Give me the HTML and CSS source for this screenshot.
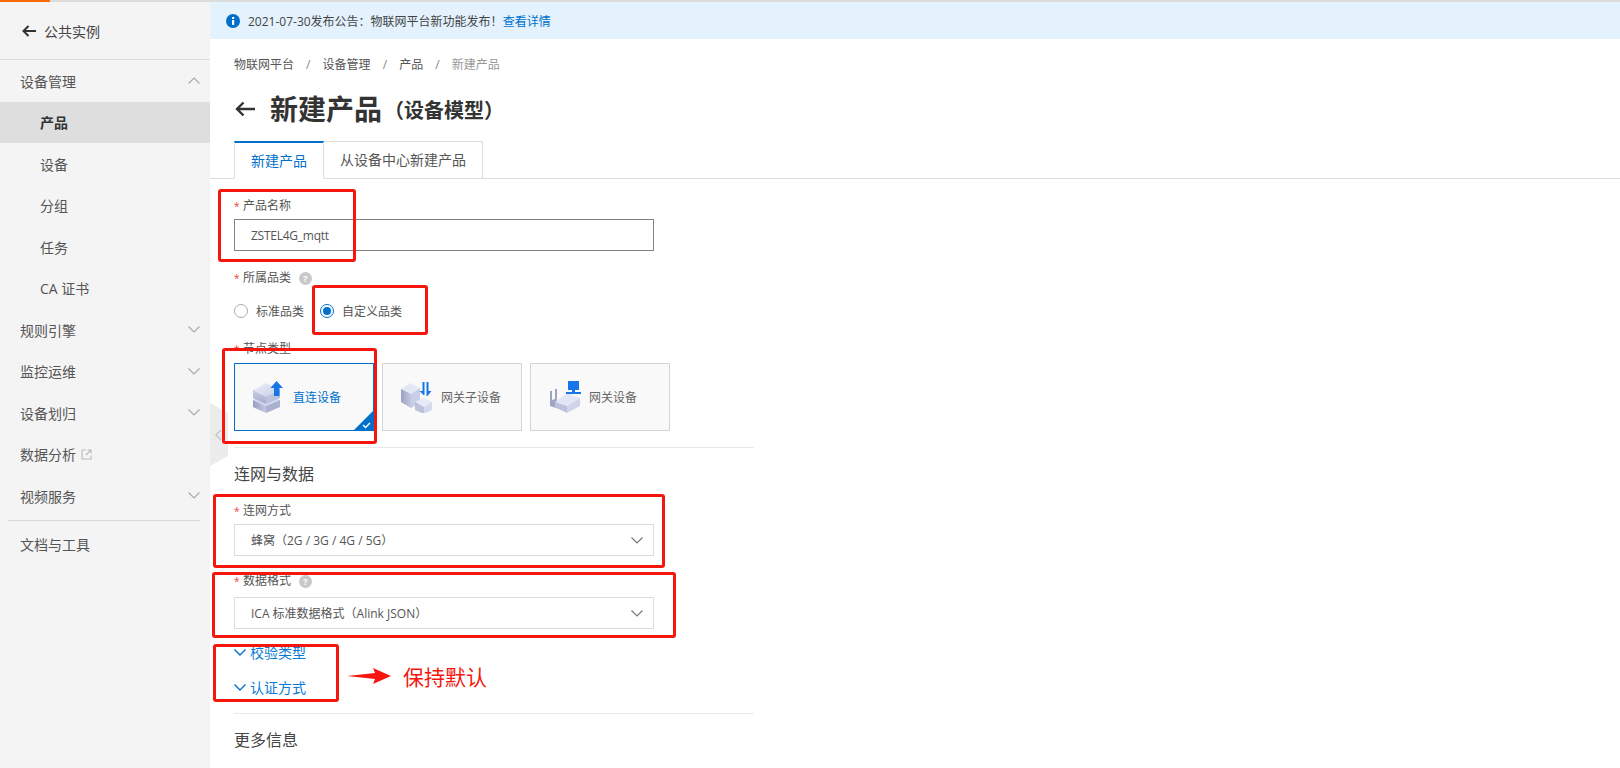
FILE: index.html
```html
<!DOCTYPE html>
<html lang="zh-CN">
<head>
<meta charset="utf-8">
<title>新建产品</title>
<link rel="stylesheet" href="styles.css">
</head>
<body>
<div class="top-strip"><div class="top-accent"></div></div>
<div class="page">
  <aside class="sidebar">
    <div class="back-row">
      <svg class="back-icon" viewBox="0 0 14 12"><path d="M14 6H2M6.500 1 1.500 6l5 5" fill="none" stroke="#333" stroke-width="2"/></svg>
      <span>公共实例</span>
    </div>
    <nav class="nav">
      <div class="nav-item"><span>设备管理</span><svg class="chev" viewBox="0 0 12 7"><path d="M.5 6.500 6 1l5.500 5.500" fill="none" stroke="#aaa" stroke-width="1.200"/></svg></div>
      <div class="nav-item sub active"><span>产品</span></div>
      <div class="nav-item sub"><span>设备</span></div>
      <div class="nav-item sub"><span>分组</span></div>
      <div class="nav-item sub"><span>任务</span></div>
      <div class="nav-item sub"><span>CA 证书</span></div>
      <div class="nav-item"><span>规则引擎</span><svg class="chev" viewBox="0 0 12 7"><path d="M.5.5 6 6l5.500-5.500" fill="none" stroke="#aaa" stroke-width="1.200"/></svg></div>
      <div class="nav-item"><span>监控运维</span><svg class="chev" viewBox="0 0 12 7"><path d="M.5.5 6 6l5.500-5.500" fill="none" stroke="#aaa" stroke-width="1.200"/></svg></div>
      <div class="nav-item"><span>设备划归</span><svg class="chev" viewBox="0 0 12 7"><path d="M.5.5 6 6l5.500-5.500" fill="none" stroke="#aaa" stroke-width="1.200"/></svg></div>
      <div class="nav-item start"><span>数据分析</span><svg class="ext" viewBox="0 0 11 11"><path d="M5 1H1v9h9V6.500M6.500 1H10v3.500M10 1 5 6" fill="none" stroke="#bbb" stroke-width="1.100"/></svg></div>
      <div class="nav-item"><span>视频服务</span><svg class="chev" viewBox="0 0 12 7"><path d="M.5.5 6 6l5.500-5.500" fill="none" stroke="#aaa" stroke-width="1.200"/></svg></div>
      <div class="nav-divider"></div>
      <div class="nav-item"><span>文档与工具</span></div>
    </nav>
  </aside>
  <main class="main">
    <div class="notice">
      <svg class="info" viewBox="0 0 14 14"><circle cx="7" cy="7" r="7" fill="#0070cc"/><rect x="6" y="6" width="2.200" height="5" fill="#fff"/><rect x="6" y="3" width="2.200" height="2" fill="#fff"/></svg>
      <span>2021-07-30发布公告：物联网平台新功能发布！</span><a class="link">查看详情</a>
    </div>
    <div class="content">
      <div class="crumbs"><span>物联网平台</span><i>/</i><span>设备管理</span><i>/</i><span>产品</span><i>/</i><span class="last">新建产品</span></div>
      <div class="title-row">
        <svg class="title-back" viewBox="0 0 20 16"><path d="M20 8H2M8.500 1.500 2 8l6.500 6.500" fill="none" stroke="#333" stroke-width="2.400"/></svg>
        <h1>新建产品</h1><span class="title-sub">（设备模型）</span>
      </div>
      <div class="tabs">
        <div class="tab on">新建产品</div>
        <div class="tab">从设备中心新建产品</div>
      </div>

      <div class="label first"><b>*</b>产品名称</div>
      <div class="field dark"><span class="tight">ZSTEL4G_mqtt</span></div>

      <div class="label gap19"><b>*</b>所属品类<span class="help">?</span></div>
      <div class="radios">
        <span class="radio"></span><span class="radio-text">标准品类</span>
        <span class="radio checked"></span><span class="radio-text">自定义品类</span>
      </div>

      <div class="label gap20"><b>*</b>节点类型</div>
      <div class="cards">
        <div class="card selected">
          <svg class="card-icon" viewBox="0 0 32 32">
            <defs>
              <linearGradient id="g1" x1="0" y1="0" x2="1" y2="1"><stop offset="0" stop-color="#eef0fb"/><stop offset="1" stop-color="#c6cbe4"/></linearGradient>
              <linearGradient id="g2" x1="0" y1="0" x2="1" y2="0"><stop offset="0" stop-color="#9aa0c2"/><stop offset="1" stop-color="#c3c8e0"/></linearGradient>
              <linearGradient id="g3" x1="0" y1="0" x2="0" y2="1"><stop offset="0" stop-color="#c9cee6"/><stop offset="1" stop-color="#a4aacb"/></linearGradient>
            </defs>
            <path d="M0 19 13 13l14 6-14 6z" fill="#d3d7ec"/><path d="M0 19v7l13 6v-7z" fill="url(#g2)"/><path d="M13 25v7l14-6v-7z" fill="#aab0cf"/>
            <path d="M0 9 13 2l14 7-14 7z" fill="url(#g1)"/><path d="M0 9v8l13 6v-7z" fill="url(#g3)"/><path d="M13 16v7l14-6V9z" fill="#bcc1dd"/>
            <path d="M21 15V7h-3.500L23.500 0l6.500 7h-3.500v8z" fill="#1677e8"/>
          </svg>
          <span>直连设备</span>
          <svg class="tick" viewBox="0 0 21 21"><path d="M21 0v21H0z" fill="#0070cc"/><path d="M10 15l2.500 2.500L17 13" fill="none" stroke="#fff" stroke-width="1.500"/></svg>
        </div>
        <div class="card">
          <svg class="card-icon" viewBox="0 0 32 32">
            <path d="M0 8 9 2l10 5-9 6z" fill="#e4e8f6"/><path d="M0 8v13l10 6V13z" fill="url(#g2)"/><path d="M10 13v14l9-5V7z" fill="#c9cee6"/>
            <path d="M14 21l8-4 9 4-8 5z" fill="#e6e9f7"/><path d="M14 21v8l9 4v-7z" fill="#bcc2dc"/><path d="M23 26v7l8-4v-8z" fill="#d6daee"/>
            <path d="M21.500 1h2v13h-1l-4-4h3zM25.500 1h2v9h3l-4 5h-1z" fill="#1677e8"/>
          </svg>
          <span>网关子设备</span>
        </div>
        <div class="card">
          <svg class="card-icon" viewBox="0 0 32 32">
            <path d="M1 10h2v9l3-1V8h2v15l12 8-19-6z" fill="#9ea4c6"/>
            <path d="M6 21l12-9 13 5-13 8z" fill="#e2e5f5"/><path d="M6 21v5l12 6v-7z" fill="#bcc2dc"/><path d="M18 25v7l13-7v-8z" fill="#cfd4ea"/>
            <rect x="19" y="0" width="11" height="9" fill="#1677e8"/><rect x="23" y="9" width="3" height="3" fill="#1677e8"/><rect x="17" y="11" width="15" height="2" fill="#1677e8"/>
          </svg>
          <span>网关设备</span>
        </div>
      </div>
      <div class="rule gap16"></div>

      <h2 class="section gap16">连网与数据</h2>

      <div class="label gap19"><b>*</b>连网方式</div>
      <div class="field select"><span>蜂窝（2G / 3G / 4G / 5G）</span><svg class="sel-chev" viewBox="0 0 12 7"><path d="M.5.5 6 6l5.500-5.500" fill="none" stroke="#777" stroke-width="1.200"/></svg></div>

      <div class="label gap17"><b>*</b>数据格式<span class="help">?</span></div>
      <div class="field select low"><span>ICA 标准数据格式（Alink JSON）</span><svg class="sel-chev" viewBox="0 0 12 7"><path d="M.5.5 6 6l5.500-5.500" fill="none" stroke="#777" stroke-width="1.200"/></svg></div>

      <div class="more gap13"><svg viewBox="0 0 12 7"><path d="M.5.5 6 6l5.500-5.500" fill="none" stroke="#0070cc" stroke-width="1.400"/></svg><span>校验类型</span></div>
      <div class="more gap15"><svg viewBox="0 0 12 7"><path d="M.5.5 6 6l5.500-5.500" fill="none" stroke="#0070cc" stroke-width="1.400"/></svg><span>认证方式</span></div>
      <div class="rule gap16"></div>
      <h2 class="section gap16">更多信息</h2>
    </div>
  </main>

  <svg class="collapse" viewBox="0 0 18 63"><path d="M0 0 18 10v43L0 63z" fill="#ececec"/><path d="M11 27l-5 5 5 5" fill="none" stroke="#c8c8c8" stroke-width="1.500"/></svg>

  <div class="mark m1"></div>
  <div class="mark m2"></div>
  <div class="mark m3"></div>
  <div class="mark m4"></div>
  <div class="mark m5"></div>
  <div class="mark m6"></div>
  <svg class="red-arrow" viewBox="0 0 44 16"><path d="M0 8 28 5 26 0l18 8-18 8 2-5z" fill="#f5160e"/></svg>
  <div class="keep">保持默认</div>
</div>
</body>
</html>
```

FILE: styles.css
```css
* { box-sizing: border-box; }
html, body { margin: 0; height: 768px; overflow: hidden; background: #fff; }
body { font-family: "Open Sans", "Noto Sans CJK SC", sans-serif; font-size: 12px; color: #555; }

.top-strip { height: 2px; background: #dcdcdc; }
.top-accent { width: 50px; height: 2px; background: #ff6a00; }

.page { position: relative; display: flex; height: 766px; }

.sidebar { width: 210px; flex: none; background: #f4f4f4; font-size: 14px; color: #555; }
.back-row { height: 58px; display: flex; align-items: center; gap: 8px; padding-left: 22px; border-bottom: 1px solid #dcdcdc; color: #444; }
.back-icon { width: 14px; height: 12px; }
.nav-item { height: 41.500px; display: flex; align-items: center; justify-content: space-between; padding: 0 10px 0 20px; }
.nav-item.sub { padding-left: 40px; }
.nav-item.start { justify-content: flex-start; gap: 5px; }
.nav-item.active { background: #dedede; color: #333; font-weight: 700; }
.chev { width: 12px; height: 7px; }
.ext { width: 11px; height: 11px; }
.nav-divider { height: 1px; margin: 3px 10px 3px 8px; background: #d8d8d8; }

.main { flex: 1; min-width: 0; }
.notice { height: 37px; display: flex; align-items: center; background: #e3f2fd; padding-left: 16px; color: #444; }
.info { width: 14px; height: 14px; margin-right: 8px; }
.link { color: #0070cc; }
.content { padding-left: 24px; }

.crumbs { display: flex; align-items: center; gap: 12px; height: 20px; margin-top: 15px; color: #555; }
.crumbs i { font-style: normal; color: #888; width: 4.600px; }
.crumbs .last { color: #999; }

.title-row { display: flex; align-items: center; height: 40px; margin-top: 15px; color: #333; }
.title-back { width: 20px; height: 16px; margin: 0 15px 0 1px; }
h1 { margin: 0; font-size: 28px; font-weight: 700; line-height: 40px; }
.title-sub { font-size: 20px; font-weight: 700; margin-left: 2px; }

.tabs { display: flex; height: 38px; margin: 12px 0 0 -24px; padding-left: 24px; border-bottom: 1px solid #dcdcdc; }
.tab { height: 38px; padding: 0 16px; border: 1px solid #dcdcdc; border-left: 0; font-size: 14px; line-height: 36px; color: #555; }
.tab.on { border-left: 1px solid #dcdcdc; border-top: 2px solid #0070cc; border-bottom: 1px solid #fff; color: #0070cc; }

.label { height: 16px; line-height: 16px; color: #555; display: flex; align-items: center; }
.label b { width: 9px; color: #e8463a; font-weight: 400; font-size: 10px; }
.first { margin-top: 19px; }
.gap19 { margin-top: 19px; }
.gap20 { margin-top: 20px; }
.gap17 { margin-top: 17px; }
.gap16 { margin-top: 16px; }
.gap15 { margin-top: 15px; }
.gap13 { margin-top: 13px; }

.help { width: 13px; height: 13px; margin-left: 8px; border-radius: 50%; background: #c8c8c8; color: #fff; font-size: 9px; font-weight: 700; line-height: 13px; text-align: center; }

.field { width: 420px; height: 32px; margin-top: 5px; padding: 0 16px; display: flex; align-items: center; border: 1px solid #dcdcdc; color: #555; }
.field.dark { border-color: #808080; }
.field.low { margin-top: 8px; }
.tight { letter-spacing: -0.25px; }
.select { justify-content: space-between; padding-right: 10px; }
.sel-chev { width: 12px; height: 7px; }

.radios { display: flex; align-items: center; height: 20px; margin-top: 15px; }
.radio { width: 14px; height: 14px; border-radius: 50%; border: 1px solid #aaa; background: #fff; margin-right: 8px; }
.radio.checked { border-color: #0070cc; position: relative; }
.radio.checked::after { content: ""; position: absolute; inset: 2px; border-radius: 50%; background: #0070cc; }
.radio-text { margin-right: 16px; }

.cards { display: flex; gap: 8px; margin-top: 6px; }
.card { position: relative; width: 140px; height: 68px; display: flex; align-items: center; gap: 8px; padding-left: 18px; background: #f9f9f9; border: 1px solid #d4d4d4; color: #666; }
.card.selected { border-color: #0070cc; color: #0070cc; }
.card-icon { width: 32px; height: 32px; flex: none; }
.tick { position: absolute; right: -1px; bottom: -1px; width: 21px; height: 21px; }

.rule { width: 520px; height: 1px; background: #e8e8e8; }
.section { margin-bottom: 0; font-size: 16px; font-weight: 400; line-height: 20px; height: 20px; color: #444; }

.more { display: flex; align-items: center; gap: 4px; height: 20px; font-size: 14px; color: #0a7ad6; }
.more svg { width: 12px; height: 7px; }

.collapse { position: absolute; left: 210px; top: 401px; width: 18px; height: 63px; }

.mark { position: absolute; border: 3px solid #f5160e; border-radius: 3px; }
.m1 { left: 218px; top: 187px; width: 138px; height: 73px; }
.m2 { left: 312px; top: 283px; width: 116px; height: 50px; }
.m3 { left: 222px; top: 346px; width: 155px; height: 96px; }
.m4 { left: 213px; top: 492px; width: 452px; height: 74px; }
.m5 { left: 212px; top: 570px; width: 464px; height: 66px; }
.m6 { left: 213px; top: 642px; width: 126px; height: 58px; }
.red-arrow { position: absolute; left: 347px; top: 666px; width: 44px; height: 16px; }
.keep { position: absolute; left: 403px; top: 661px; font-size: 21px; line-height: 28px; color: #f5160e; }
```
